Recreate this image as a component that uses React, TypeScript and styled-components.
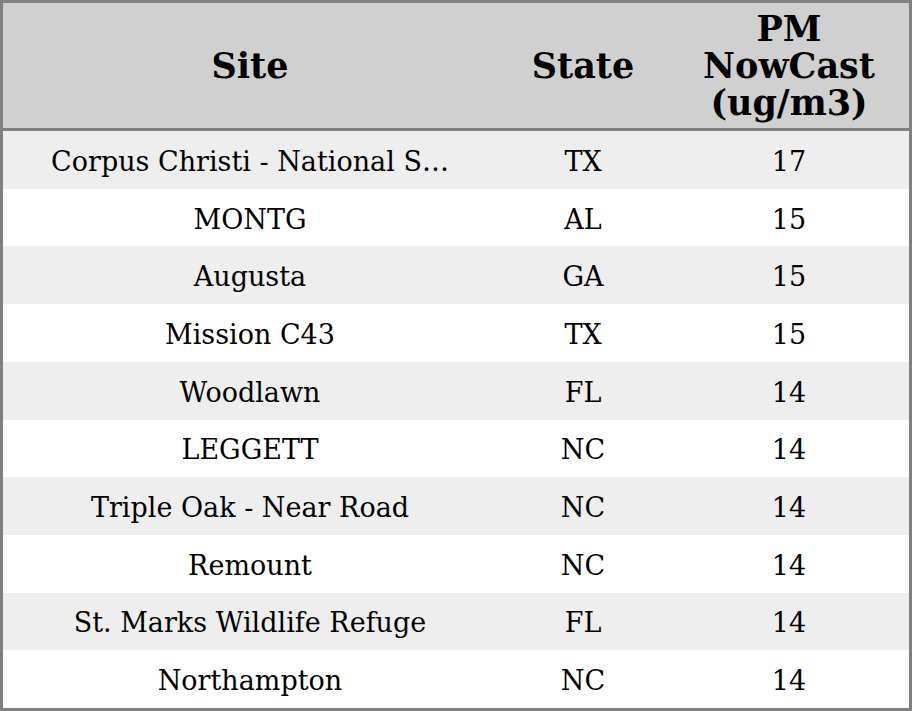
import styled, { createGlobalStyle } from 'styled-components';

const GlobalStyle = createGlobalStyle`
  html, body {
    margin: 0;
    padding: 0;
    background: #ffffff;
  }
  body {
    font-family: "DejaVu Serif", "Liberation Serif", serif;
    color: #000000;
  }
`;

interface Reading {
  site: string;
  state: string;
  value: number;
}

const READINGS: Reading[] = [
  { site: 'Corpus Christi - National S…', state: 'TX', value: 17 },
  { site: 'MONTG', state: 'AL', value: 15 },
  { site: 'Augusta', state: 'GA', value: 15 },
  { site: 'Mission C43', state: 'TX', value: 15 },
  { site: 'Woodlawn', state: 'FL', value: 14 },
  { site: 'LEGGETT', state: 'NC', value: 14 },
  { site: 'Triple Oak - Near Road', state: 'NC', value: 14 },
  { site: 'Remount', state: 'NC', value: 14 },
  { site: 'St. Marks Wildlife Refuge', state: 'FL', value: 14 },
  { site: 'Northampton', state: 'NC', value: 14 },
];

export default function App() {
  return (
    <>
      <GlobalStyle />
      <Table>
        <HeaderRow>
          <HeaderCell>Site</HeaderCell>
          <HeaderCell>State</HeaderCell>
          <HeaderCell>
            PM<br />NowCast<br />(ug/m3)
          </HeaderCell>
        </HeaderRow>
        {READINGS.map((r, i) => (
          <Row key={r.site} $striped={i % 2 === 0}>
            <Cell>{r.site}</Cell>
            <Cell>{r.state}</Cell>
            <Cell>{r.value}</Cell>
          </Row>
        ))}
      </Table>
    </>
  );
}

const Table = styled.div`
  box-sizing: border-box;
  width: 912px;
  height: 711px;
  border: 3px solid #808080;
  display: flex;
  flex-direction: column;
  overflow: hidden;
`;

const columns = `494px 172px 1fr`;

const HeaderRow = styled.div`
  display: grid;
  grid-template-columns: ${columns};
  height: 125px;
  flex-shrink: 0;
  background-color: #d0d0d0;
  border-bottom: 3px solid #808080;
`;

const HeaderCell = styled.div`
  display: flex;
  align-items: center;
  justify-content: center;
  text-align: center;
  font-size: 35px;
  font-weight: bold;
  line-height: 37px;
`;

const Row = styled.div<{ $striped: boolean }>`
  display: grid;
  grid-template-columns: ${columns};
  flex: 1;
  background-color: ${({ $striped }) => ($striped ? '#eeeeee' : '#ffffff')};
`;

const Cell = styled.div`
  display: flex;
  align-items: center;
  justify-content: center;
  text-align: center;
  font-size: 27px;
  padding-top: 3px;
  white-space: nowrap;
  overflow: hidden;
`;
